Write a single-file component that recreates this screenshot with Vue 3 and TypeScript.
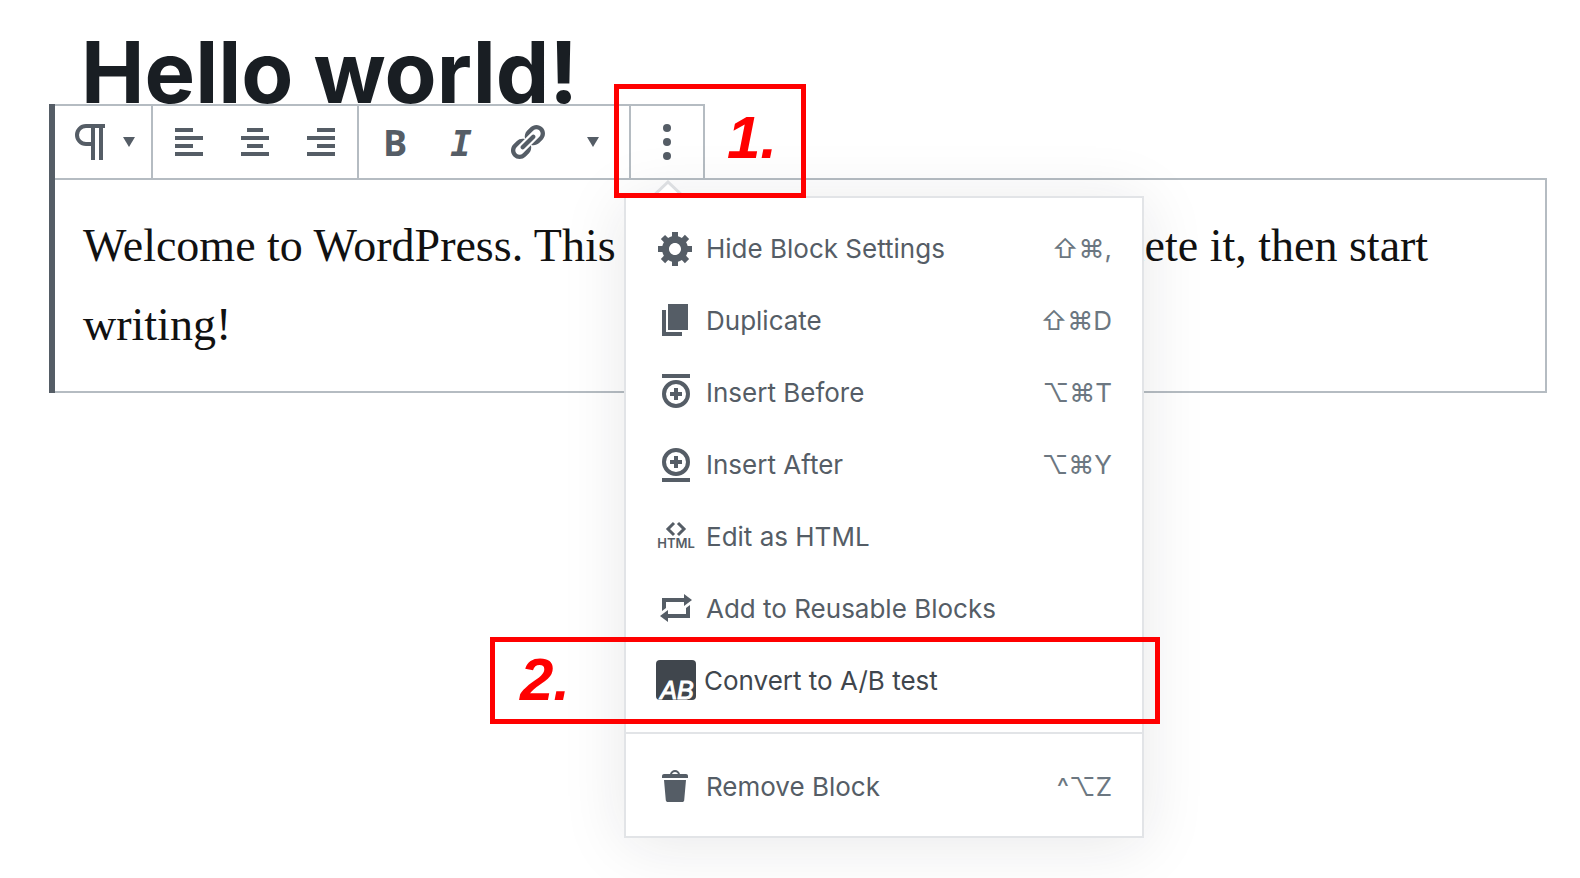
<script setup lang="ts">
import { ref } from 'vue'

interface MenuEntry {
  id: string
  label: string
  keys?: string
  step?: string
}

const title = ref('Hello world!')
const paragraph = ref(
  'Welcome to WordPress. This is your first post. Edit or delete it, then start writing!',
)

const alignments = [
  { id: 'left', label: 'Align text left', d: 'M3 3h9v2H3zM3 7h14v2H3zM3 11h9v2H3zM3 15h14v2H3z' },
  { id: 'center', label: 'Align text center', d: 'M6 3h8v2H6zM3 7h14v2H3zM6 11h8v2H6zM3 15h14v2H3z' },
  { id: 'right', label: 'Align text right', d: 'M8 3h9v2H8zM3 7h14v2H3zM8 11h9v2H8zM3 15h14v2H3z' },
]

const groups: MenuEntry[][] = [
  [
    { id: 'settings', label: 'Hide Block Settings', keys: '⇧⌘,' },
    { id: 'duplicate', label: 'Duplicate', keys: '⇧⌘D' },
    { id: 'before', label: 'Insert Before', keys: '⌥⌘T' },
    { id: 'after', label: 'Insert After', keys: '⌥⌘Y' },
    { id: 'html', label: 'Edit as HTML' },
    { id: 'reusable', label: 'Add to Reusable Blocks' },
    { id: 'abtest', label: 'Convert to A/B test', step: '2.' },
  ],
  [{ id: 'remove', label: 'Remove Block', keys: '^⌥Z' }],
]
</script>

<template>
  <main class="editor">
    <h1 class="title">{{ title }}</h1>

    <section class="block">
      <div class="toolbar" role="toolbar" aria-label="Block tools">
        <div class="group switcher">
          <button type="button" class="tool wide" aria-label="Change block type">
            <svg class="icon" viewBox="0 0 20 20" aria-hidden="true">
              <path class="line" d="M17 2H7.5a4.5 4.5 0 0 0 0 9H10M11 2v17M15 2v17" />
            </svg>
            <svg class="caret" viewBox="0 0 12 10" aria-hidden="true"><path d="M0 0h12L6 10z" /></svg>
          </button>
        </div>
        <div class="group">
          <button v-for="a in alignments" :key="a.id" type="button" class="tool" :aria-label="a.label">
            <svg class="icon" viewBox="0 0 20 20" aria-hidden="true"><path :d="a.d" /></svg>
          </button>
        </div>
        <div class="group">
          <button type="button" class="tool bold" aria-label="Bold">B</button>
          <button type="button" class="tool italic" aria-label="Italic">I</button>
          <button type="button" class="tool" aria-label="Link">
            <svg class="icon" viewBox="0 0 20 20" aria-hidden="true">
              <path
                d="M17.74 2.76c1.68 1.69 1.68 4.41 0 6.1l-1.53 1.52c-1.12 1.12-2.7 1.47-4.14 1.09l2.62-2.61.76-.77.76-.76c.84-.84.84-2.2 0-3.04-.84-.85-2.2-.85-3.04 0l-.77.76-3.38 3.38c-.37-1.44-.02-3.02 1.1-4.14l1.52-1.53c1.69-1.68 4.42-1.68 6.1 0zM8.59 13.43l5.34-5.34c.42-.42.42-1.1 0-1.52-.44-.43-1.13-.39-1.53 0l-5.33 5.34c-.42.42-.42 1.1 0 1.52.44.43 1.13.39 1.52 0zm-.76 2.29l4.14-4.15c.38 1.44.03 3.02-1.09 4.14l-1.52 1.53c-1.69 1.68-4.41 1.68-6.1 0-1.68-1.68-1.68-4.42 0-6.1l1.53-1.52c1.12-1.12 2.7-1.47 4.14-1.1l-4.14 4.15c-.85.84-.85 2.2 0 3.05.84.84 2.2.84 3.04 0z"
              />
            </svg>
          </button>
          <button type="button" class="tool" aria-label="More rich text controls">
            <svg class="caret" viewBox="0 0 12 10" aria-hidden="true"><path d="M0 0h12L6 10z" /></svg>
          </button>
        </div>
        <div class="group more">
          <button type="button" class="tool" aria-label="More options" aria-haspopup="menu" aria-expanded="true">
            <svg class="icon" viewBox="0 0 20 20" aria-hidden="true">
              <circle cx="10" cy="3" r="2" /><circle cx="10" cy="10" r="2" /><circle cx="10" cy="17" r="2" />
            </svg>
          </button>

          <div class="popover">
            <svg class="arrow" viewBox="0 0 34 18" aria-hidden="true">
              <path class="arrow-fill" d="M0 18L17 1l17 17z" />
              <path class="arrow-edge" d="M0 18L17 2l17 16" />
            </svg>
            <div class="menu" role="menu" aria-label="More options">
              <div v-for="(group, index) in groups" :key="index" class="section" role="group">
                <button
                  v-for="item in group"
                  :key="item.id"
                  type="button"
                  role="menuitem"
                  class="item"
                  :class="{ active: item.step }"
                >
                  <svg v-if="item.id === 'html'" class="icon" viewBox="0 0 40 40" aria-hidden="true">
                    <path class="thin" d="M18 7l-6 6l6 6M22 7l6 6l-6 6" />
                    <text class="html-mark" x="20" y="32" text-anchor="middle">HTML</text>
                  </svg>
                  <svg v-else-if="item.id === 'abtest'" class="icon" viewBox="0 0 40 40" aria-hidden="true">
                    <rect width="40" height="40" rx="4" />
                    <text class="ab-mark" x="21" y="39" text-anchor="middle">AB</text>
                  </svg>
                  <svg v-else class="icon" viewBox="0 0 20 20" aria-hidden="true">
                    <path
                      v-if="item.id === 'settings'"
                      d="M18 12h-2.18c-.17.7-.44 1.35-.81 1.93l1.54 1.54-2.1 2.1-1.54-1.54c-.58.36-1.23.63-1.91.79V19H8v-2.18c-.68-.16-1.33-.43-1.91-.79l-1.54 1.54-2.12-2.12 1.54-1.54c-.36-.58-.63-1.23-.79-1.91H1V9.03h2.17c.16-.7.44-1.35.8-1.94L2.43 5.55l2.1-2.1 1.54 1.54c.58-.37 1.24-.64 1.93-.81V2h3v2.18c.68.16 1.33.43 1.91.79l1.54-1.54 2.12 2.12-1.54 1.54c.36.59.64 1.24.8 1.94H18V12zm-8.5 1.5c1.66 0 3-1.34 3-3s-1.34-3-3-3-3 1.34-3 3 1.34 3 3 3z"
                    />
                    <path v-else-if="item.id === 'duplicate'" d="M6 15V2h10v13H6zm-1 1h8v2H3V5h2v11z" />
                    <template v-else-if="item.id === 'before'">
                      <path d="M3 1h14v2H3z" />
                      <path class="line" d="M10 8v6M7 11h6M16 11a6 6 0 1 1-12 0a6 6 0 0 1 12 0z" />
                    </template>
                    <template v-else-if="item.id === 'after'">
                      <path d="M3 17h14v2H3z" />
                      <path class="line" d="M10 6v6M7 9h6M16 9a6 6 0 1 1-12 0a6 6 0 0 1 12 0z" />
                    </template>
                    <path
                      v-else-if="item.id === 'reusable'"
                      d="M5 7v3l-2 1.5V5h11V3l4 3.01L14 9V7H5zm10 6v-3l2-1.5V15H6v2l-4-3.01L6 11v2h9z"
                    />
                    <path
                      v-else
                      d="M12 4h3c.6 0 1 .4 1 1v1H3V5c0-.6.5-1 1-1h3c.2-1.1 1.3-2 2.5-2s2.3.9 2.5 2zM8 4h3c-.2-.6-.9-1-1.5-1S8.2 3.4 8 4zM4 7h11l-.9 10.1c0 .5-.5.9-1 .9H5.9c-.5 0-.9-.4-1-.9L4 7z"
                    />
                  </svg>
                  <span class="label">{{ item.label }}</span>
                  <kbd v-if="item.keys" class="keys">{{ item.keys }}</kbd>
                  <span v-if="item.step" class="callout callout-item">{{ item.step }}</span>
                </button>
              </div>
            </div>
          </div>

          <span class="callout callout-more">1.</span>
        </div>
      </div>

      <p class="paragraph">{{ paragraph }}</p>
    </section>
  </main>
</template>

<style>
body {
  margin: 0;
  background: #fff;
}
</style>

<style scoped>
.editor {
  box-sizing: border-box;
  min-height: 100vh;
  padding: 24px 33px 24px 49px;
  overflow: hidden;
  color: #555d66;
  font-family: Inter, "Liberation Sans", sans-serif;
}

.title {
  height: 80px;
  margin: 0;
  padding-left: 32px;
  color: #191e23;
  font-size: 85px;
  font-weight: 700;
  line-height: 98px;
  white-space: nowrap;
}

.block {
  position: relative;
  border-left: 6px solid #555d66;
}

.toolbar {
  display: flex;
  width: max-content;
  height: 72px;
  border: 2px solid #b5bcc2;
  border-left: 0;
  background: #fff;
}

.group {
  display: flex;
  padding: 0 3px;
}

.group + .group {
  border-left: 2px solid #b5bcc2;
}

.switcher {
  padding: 0;
}

.tool {
  display: flex;
  align-items: center;
  justify-content: center;
  width: 66px;
  padding: 0;
  border: 0;
  background: none;
  color: inherit;
  font: inherit;
}

.tool.wide {
  gap: 12px;
  width: 96px;
}

.bold {
  font: 700 36px "Open Sans", sans-serif;
}

.italic {
  padding-top: 2px;
  font: italic 700 36px "DejaVu Sans Mono", monospace;
}

.icon {
  flex: none;
  width: 40px;
  height: 40px;
  fill: currentColor;
}

.caret {
  width: 12px;
  height: 10px;
  fill: currentColor;
}

.line {
  fill: none;
  stroke: currentColor;
  stroke-width: 2;
}

.thin {
  fill: none;
  stroke: currentColor;
  stroke-width: 3;
}

.html-mark {
  font: 600 13px Inter, sans-serif;
}

.ab-mark {
  fill: #fff;
  stroke: #fff;
  stroke-width: 1;
  font: italic 400 25px "Liberation Sans", sans-serif;
}

.more {
  position: relative;
}

.popover {
  position: absolute;
  top: 90px;
  left: -7px;
  z-index: 2;
}

.arrow {
  position: absolute;
  top: -16px;
  left: 27px;
  width: 34px;
  height: 18px;
}

.arrow-fill {
  fill: #fff;
}

.arrow-edge {
  fill: none;
  stroke: #dcdee1;
  stroke-width: 3;
}

.menu {
  width: 516px;
  border: 2px solid #e2e4e7;
  background: #fff;
  box-shadow: 0 6px 60px rgba(25, 30, 35, 0.1);
}

.section {
  padding: 14px 0 16px;
}

.section + .section {
  padding: 16px 0 14px;
  border-top: 2px solid #e2e4e7;
}

.item {
  position: relative;
  display: flex;
  align-items: center;
  gap: 10px;
  width: 100%;
  height: 72px;
  padding: 0 30px;
  border: 0;
  background: none;
  color: inherit;
  font: 400 26px Inter, sans-serif;
  text-align: left;
}

.item.active {
  gap: 8px;
  color: #40464d;
}

.label {
  flex: 1;
  white-space: nowrap;
}

.keys {
  color: #6c7781;
  font: inherit;
}

.callout {
  position: absolute;
  z-index: 3;
  box-sizing: border-box;
  border: 5px solid #f00;
  color: #f00;
  font: italic 700 60px "Liberation Sans", sans-serif;
  pointer-events: none;
}

.callout-more {
  top: -22px;
  left: -17px;
  width: 192px;
  height: 114px;
  padding-left: 108px;
  line-height: 98px;
}

.callout-item {
  top: -7px;
  left: -136px;
  width: 670px;
  height: 87px;
  padding-left: 25px;
  line-height: 76px;
}

.paragraph {
  margin: -2px 0 0;
  padding: 26px 28px 27px;
  border: 2px solid #b5bcc2;
  border-left: 0;
  color: #111;
  font: 400 46px/79px "Liberation Serif", serif;
}
</style>
